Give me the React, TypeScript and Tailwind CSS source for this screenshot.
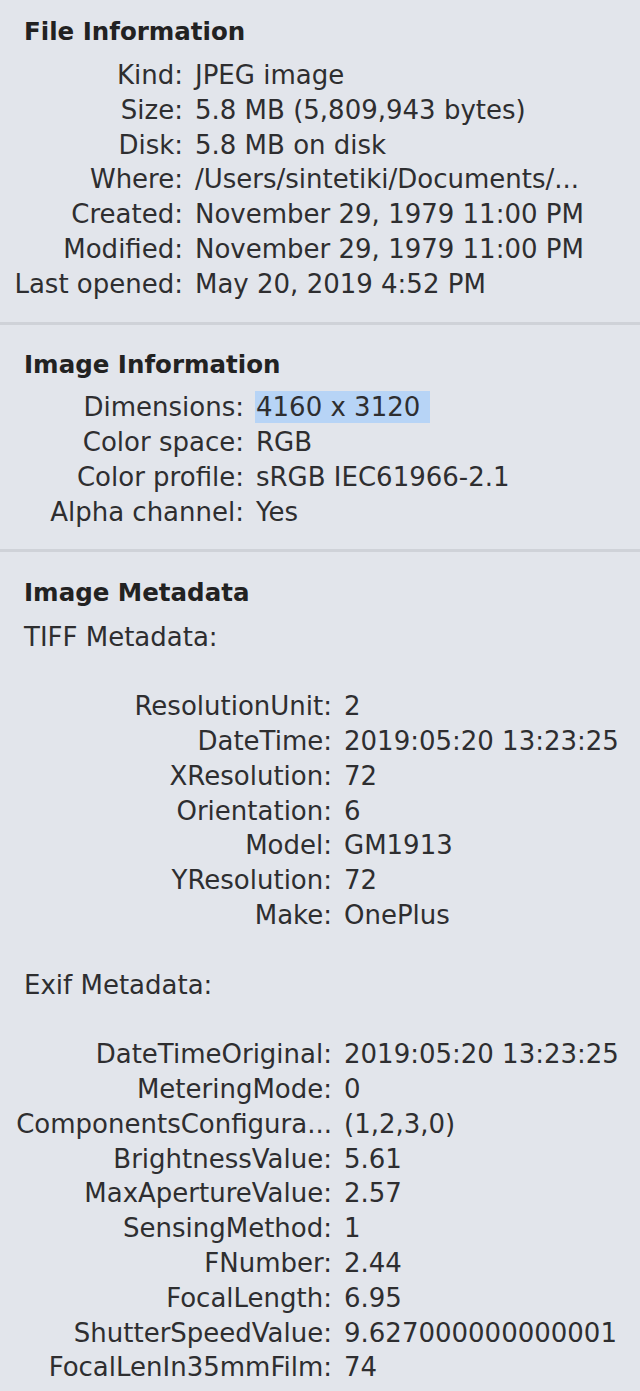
type Row = [string, string, boolean?];

const fileInfo: Row[] = [
  ['Kind:', 'JPEG image'],
  ['Size:', '5.8 MB (5,809,943 bytes)'],
  ['Disk:', '5.8 MB on disk'],
  ['Where:', '/Users/sintetiki/Documents/...'],
  ['Created:', 'November 29, 1979 11:00 PM'],
  ['Modified:', 'November 29, 1979 11:00 PM'],
  ['Last opened:', 'May 20, 2019 4:52 PM'],
];

const imageInfo: Row[] = [
  ['Dimensions:', '4160 x 3120', true],
  ['Color space:', 'RGB'],
  ['Color profile:', 'sRGB IEC61966-2.1'],
  ['Alpha channel:', 'Yes'],
];

const tiff: Row[] = [
  ['ResolutionUnit:', '2'],
  ['DateTime:', '2019:05:20 13:23:25'],
  ['XResolution:', '72'],
  ['Orientation:', '6'],
  ['Model:', 'GM1913'],
  ['YResolution:', '72'],
  ['Make:', 'OnePlus'],
];

const exif: Row[] = [
  ['DateTimeOriginal:', '2019:05:20 13:23:25'],
  ['MeteringMode:', '0'],
  ['ComponentsConfigura...', '(1,2,3,0)'],
  ['BrightnessValue:', '5.61'],
  ['MaxApertureValue:', '2.57'],
  ['SensingMethod:', '1'],
  ['FNumber:', '2.44'],
  ['FocalLength:', '6.95'],
  ['ShutterSpeedValue:', '9.627000000000001'],
  ['FocalLenIn35mmFilm:', '74'],
];

const Rows = ({ rows, labelClass }: { rows: Row[]; labelClass: string }) => (
  <div className="flex flex-col">
    {rows.map(([label, value, selected]) => (
      <div key={label} className="flex items-center h-[34.8px] whitespace-nowrap">
        <div className={`${labelClass} text-right shrink-0`}>{label}</div>
        <div className="pl-[12px]">
          <span
            className={
              selected
                ? 'inline-block bg-[#b7d4f6] h-[32px] leading-[32px] pr-[10px] -ml-[1px] pl-[1px]'
                : ''
            }
          >
            {value}
          </span>
        </div>
      </div>
    ))}
  </div>
);

const Divider = () => <div className="h-[3px] bg-[#cfd2d8]" />;

export default function App() {
  return (
    <div className="min-h-screen w-[640px] bg-[#e2e5eb] text-[#2e2e30] text-[26px] font-['DejaVu_Sans',sans-serif] overflow-hidden">
      {/* File Information */}
      <section className="pt-[14px] pb-[20px]">
        <h2 className="pl-[24px] h-[35px] leading-[35px] text-[24.5px] font-bold text-[#222] mb-[9px]">File Information</h2>
        <Rows rows={fileInfo} labelClass="w-[183px]" />
      </section>
      <Divider />

      {/* Image Information */}
      <section className="pt-[22px] pb-[19px]">
        <h2 className="pl-[24px] h-[35px] leading-[35px] text-[24.5px] font-bold text-[#222] mb-[9px]">Image Information</h2>
        <Rows rows={imageInfo} labelClass="w-[244px]" />
      </section>
      <Divider />

      {/* Image Metadata */}
      <section className="pt-[23px]">
        <h2 className="pl-[24px] h-[35px] leading-[35px] text-[24.5px] font-bold text-[#222] mb-[10px]">Image Metadata</h2>
        <div className="pl-[24px] h-[34.8px] leading-[34.8px]">TIFF Metadata:</div>
        <div className="h-[34.8px]" />
        <Rows rows={tiff} labelClass="w-[332px]" />
        <div className="h-[34.8px]" />
        <div className="pl-[24px] h-[34.8px] leading-[34.8px]">Exif Metadata:</div>
        <div className="h-[34.8px]" />
        <Rows rows={exif} labelClass="w-[332px]" />
      </section>
    </div>
  );
}
